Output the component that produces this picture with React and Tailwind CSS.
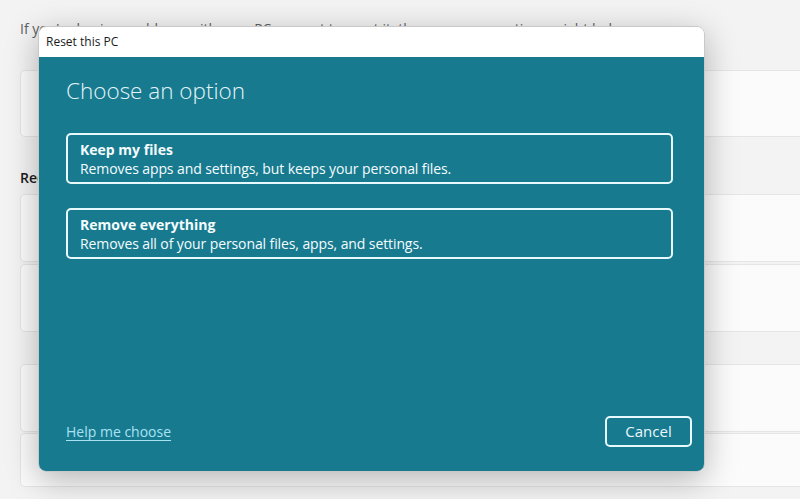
const font = { fontFamily: '"Open Sans", "Noto Sans", sans-serif' }

const options = [
  { title: 'Keep my files', desc: 'Removes apps and settings, but keeps your personal files.' },
  { title: 'Remove everything', desc: 'Removes all of your personal files, apps, and settings.' },
]

function Card({ className = '' }) {
  return <div className={`bg-[#fbfbfb] border border-[#e5e5e5] rounded-[5px] ${className}`} />
}

export default function App() {
  return (
    <div className="relative w-[800px] h-[499px] overflow-hidden bg-[#f3f3f3]" style={font}>
      {/* settings page behind the dialog */}
      <div className="w-[840px] pl-[20px] pt-[19px] flex flex-col">
        <p className="text-[14px] leading-[20px] text-[#5f5f5f]">
          If you're having problems with your PC or want to reset it, these recovery options might help
        </p>
        <Card className="mt-[31px] h-[67px]" />
        <p className="mt-[31px] text-[14px] leading-[20px] font-semibold text-[#1b1b1b]">Recovery options</p>
        <Card className="mt-[6px] h-[68px]" />
        <Card className="mt-[2px] h-[68px]" />
        <div className="h-[32px]" />
        <Card className="h-[68px]" />
        <Card className="mt-[1px] h-[54px]" />
      </div>

      {/* dialog */}
      <div className="absolute left-[38px] top-[26px] w-[667px] h-[446px] rounded-[8px] overflow-hidden flex flex-col border border-[#c9c9c9] shadow-[0_8px_32px_rgba(0,0,0,0.28)]">
        <div className="h-[30px] bg-white flex items-center pl-[7px] text-[12px] text-[#1b1b1b]">
          Reset this PC
        </div>
        <div className="flex-1 bg-[#187a8f] flex flex-col pl-[27px] pr-[12px] pb-[24px]">
          <h1 className="mt-[19px] text-[22.5px] leading-[30px] font-light text-[#e4f5f9]">Choose an option</h1>
          <div className="mt-[27px] mr-[19px] flex flex-col gap-[24px]">
            {options.map((o) => (
              <div
                key={o.title}
                className="border-2 border-[#e6f9fd] rounded-[5px] px-[12px] pt-[5px] pb-[4px] text-[14px] leading-[19px] text-[#f4fcfe]"
              >
                <div className="font-bold">{o.title}</div>
                <div className="tracking-[-0.1px]">{o.desc}</div>
              </div>
            ))}
          </div>
          <div className="flex-1" />
          <div className="flex items-center justify-between">
            <span className="text-[14px] text-[#a8e3f3] underline underline-offset-[3px]">Help me choose</span>
            <button className="w-[87px] h-[31px] border-2 border-[#e6f9fd] rounded-[5px] text-[15px] text-[#eaf8fb]">
              Cancel
            </button>
          </div>
        </div>
      </div>
    </div>
  )
}
